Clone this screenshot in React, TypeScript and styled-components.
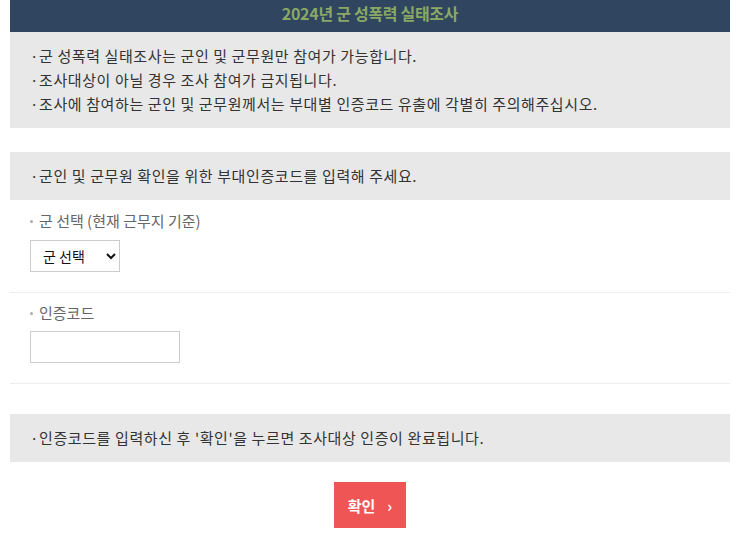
import styled, { createGlobalStyle } from "styled-components";

const GlobalStyle = createGlobalStyle`
    body {
        margin: 0;
        background: #fff;
        font-family: "Noto Sans CJK KR", "Noto Sans", sans-serif;
        color: #333;
    }
`

const Page = styled.div`
    width: 720px;
    margin-left: 10px;
`

const Header = styled.h1`
    margin: 0;
    height: 32px;
    background-color: #2f4560;
    color: #8aa865;
    font-size: 16px;
    font-weight: bold;
    line-height: 26px;
    letter-spacing: -0.3px;
    text-align: center;
`

const InfoBox = styled.div`
    background-color: #e8e8e8;
    padding: 12px 20px 12px;
    font-size: 15px;
    line-height: 24px;
    letter-spacing: 0.6px;
    color: #333;
`

const Line = styled.p`
    margin: 0;
`

const Label = styled.div`
    display: flex;
    align-items: center;
    gap: 6px;
    font-size: 15px;
    line-height: 22px;
    color: #666;
    &::before {
        content: "";
        width: 3px;
        height: 3px;
        border-radius: 50%;
        background: #aaa;
    }
`

const Field = styled.div<{ $tight?: boolean }>`
    padding: ${(p) => (p.$tight ? "9px" : "10px")} 20px 20px;
    border-bottom: 1px solid #eee;
    ${Label} {
        margin-bottom: ${(p) => (p.$tight ? "7px" : "8px")};
    }
`

const Select = styled.select`
    box-sizing: border-box;
    display: block;
    width: 90px;
    height: 32px;
    padding: 0 6px 0 8px;
    border: 1px solid #ccc;
    border-radius: 0;
    background: #fff;
    font-family: inherit;
    font-size: 14px;
    color: #111;
`

const Input = styled.input`
    box-sizing: border-box;
    display: block;
    width: 150px;
    height: 32px;
    border: 1px solid #ccc;
    padding: 0 8px;
`

const Spacer = styled.div<{ $h: number }>`
    height: ${(p) => p.$h}px;
`

const ButtonRow = styled.div`
    display: flex;
    justify-content: center;
    padding-top: 20px;
`

const Button = styled.button`
    width: 72px;
    height: 46px;
    border: none;
    background-color: #f05555;
    color: #fff;
    font-family: inherit;
    font-size: 15px;
    font-weight: bold;
    display: flex;
    align-items: center;
    justify-content: center;
    gap: 12px;
    cursor: pointer;
`

const Chevron = styled.span`
    font-size: 15px;
    font-weight: bold;
`

const App = () => {
    return <>
        <GlobalStyle />
        <Page>
            <Header>2024년 군 성폭력 실태조사</Header>
            <InfoBox>
                <Line>·군 성폭력 실태조사는 군인 및 군무원만 참여가 가능합니다.</Line>
                <Line>·조사대상이 아닐 경우 조사 참여가 금지됩니다.</Line>
                <Line>·조사에 참여하는 군인 및 군무원께서는 부대별 인증코드 유출에 각별히 주의해주십시오.</Line>
            </InfoBox>
            <Spacer $h={24} />
            <InfoBox>
                <Line>·군인 및 군무원 확인을 위한 부대인증코드를 입력해 주세요.</Line>
            </InfoBox>
            <Field>
                <Label>군 선택 (현재 근무지 기준)</Label>
                <Select defaultValue="">
                    <option value="">군 선택</option>
                    <option value="army">육군</option>
                    <option value="navy">해군</option>
                    <option value="air">공군</option>
                    <option value="marine">해병대</option>
                </Select>
            </Field>
            <Field $tight>
                <Label>인증코드</Label>
                <Input type="text" />
            </Field>
            <Spacer $h={30} />
            <InfoBox>
                <Line>·인증코드를 입력하신 후 '확인'을 누르면 조사대상 인증이 완료됩니다.</Line>
            </InfoBox>
            <ButtonRow>
                <Button>확인 <Chevron>›</Chevron></Button>
            </ButtonRow>
        </Page>
    </>
}

export default App;
